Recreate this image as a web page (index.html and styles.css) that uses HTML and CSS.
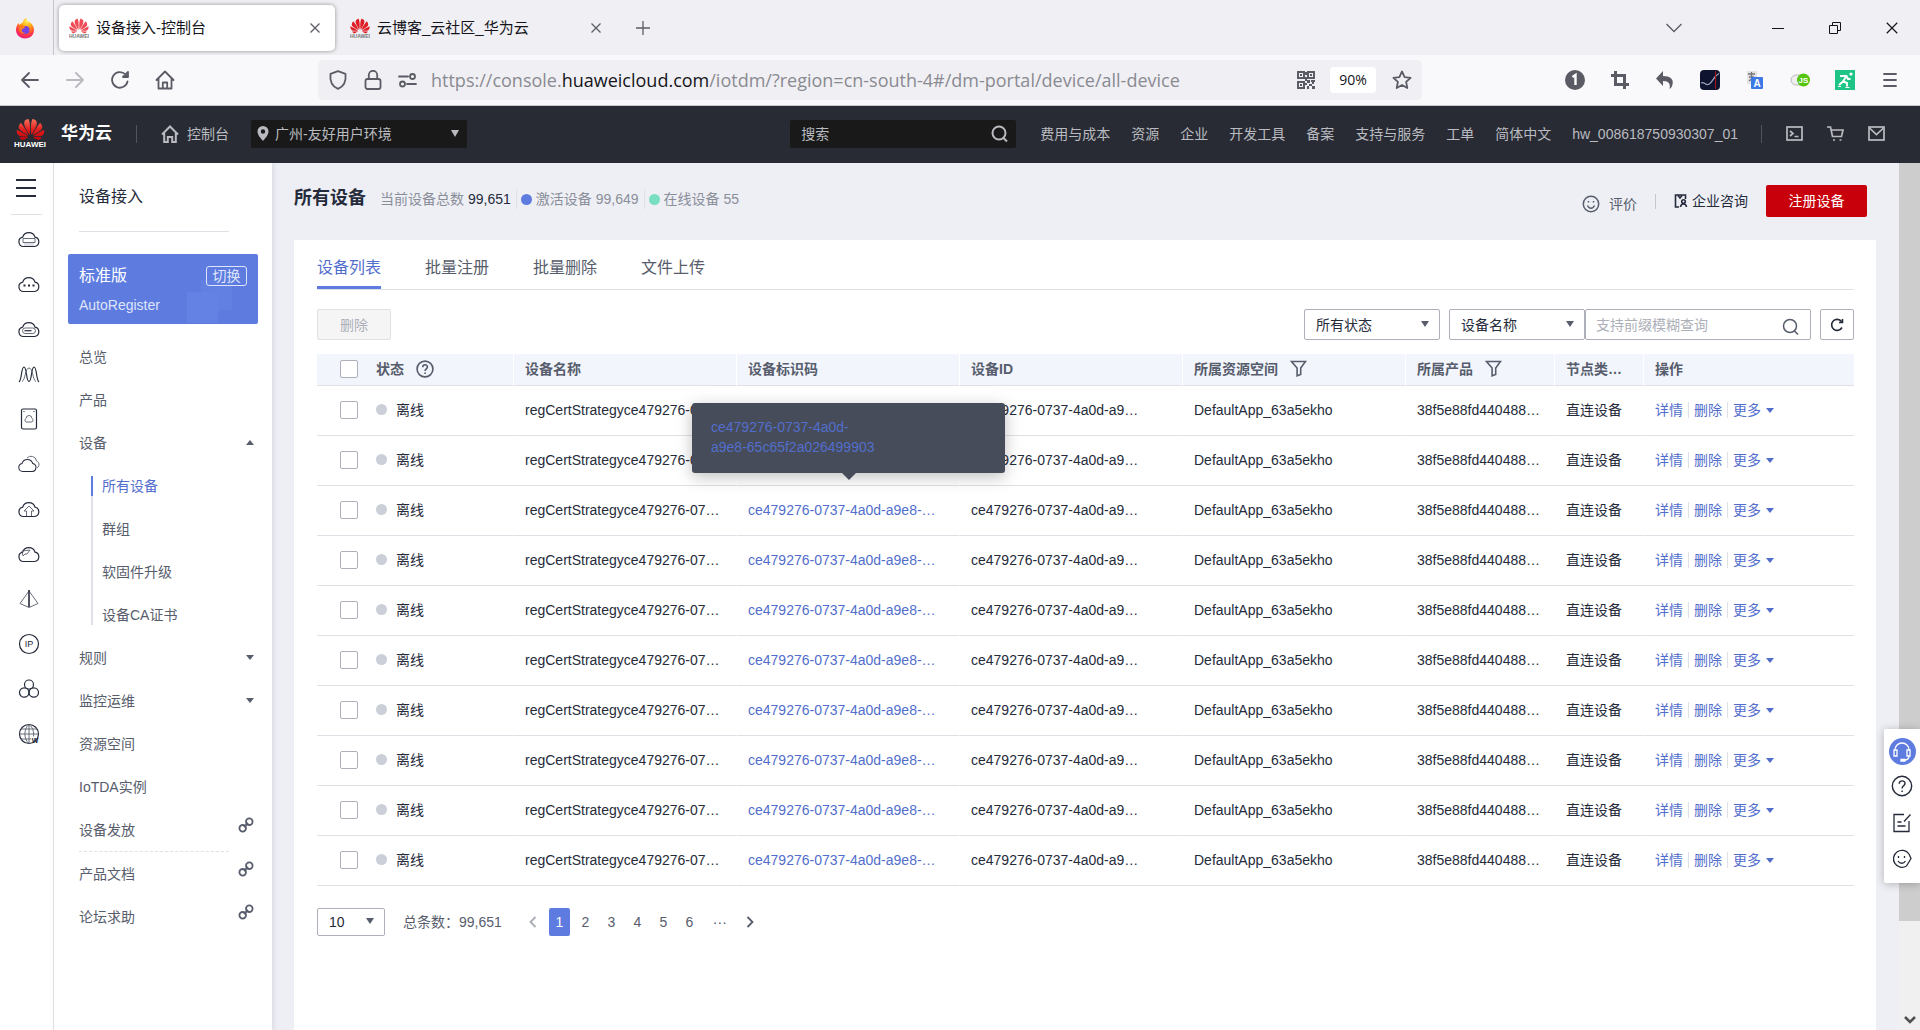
FILE: index.html
```html
<!DOCTYPE html>
<html lang="zh-CN">
<head>
<meta charset="utf-8">
<title>设备接入-控制台</title>
<link rel="stylesheet" href="styles.css">
</head>
<body>
<svg class="defs" aria-hidden="true">
  <linearGradient id="redfade" x1="0" y1="0" x2="0" y2="1"><stop offset="0" stop-color="#f6705a"/><stop offset=".5" stop-color="#e0201f"/><stop offset="1" stop-color="#c8000b"/></linearGradient>
  <radialGradient id="fox" cx=".6" cy=".15" r=".9"><stop offset="0" stop-color="#fff44f"/><stop offset=".4" stop-color="#ff980e"/><stop offset=".75" stop-color="#ff3647"/><stop offset="1" stop-color="#e31587"/></radialGradient>
  <symbol id="petals" viewBox="0 2 24 20"><path d="M3.67 6.14S1.82 7.91 1.72 9.78v.35c.08 1.51 1.22 2.4 1.22 2.4 1.83 1.79 6.26 4.04 7.3 4.55 0 0 .06.03.1-.01l.02-.04v-.04C7.52 10.8 3.67 6.14 3.67 6.14zM9.65 18.6c-.02-.08-.1-.08-.1-.08l-7.38.26c.8 1.43 2.15 2.53 3.56 2.2.96-.25 3.16-1.78 3.88-2.3.06-.05.04-.09.04-.09zm.08-.78C6.49 15.63.21 12.28.21 12.28c-.15.46-.2.9-.21 1.3v.07c0 1.07.4 1.82.4 1.82.8 1.69 2.34 2.2 2.34 2.2.7.3 1.4.31 1.4.31.12.02 4.4 0 5.54 0 .05 0 .08-.05.08-.05v-.06c0-.03-.03-.05-.03-.05zM9.06 3.19a3.42 3.42 0 00-2.57 3.15v.41c.03.6.16 1.05.16 1.05.66 2.9 3.86 7.65 4.55 8.65.05.05.1.03.1.03a.1.1 0 00.06-.1c1.06-10.6-1.11-13.42-1.11-13.42-.32.02-1.19.23-1.19.23zm8.3 2.27s-.49-1.8-2.44-2.28c0 0-.57-.14-1.17-.22 0 0-2.18 2.81-1.12 13.43.01.07.06.08.06.08.07.03.1-.03.1-.03.72-1.03 3.9-5.76 4.55-8.64 0 0 .36-1.4.02-2.34zm-2.92 13.07s-.07 0-.09.05c0 0-.01.07.03.1.7.51 2.85 2 3.88 2.3 0 0 .16.05.43.06h.14c.69-.02 1.9-.37 3-2.26l-7.4-.25zm7.83-8.41c.14-2.06-1.94-3.97-1.94-3.98 0 0-3.85 4.66-6.67 10.8 0 0-.03.08.02.13l.04.01h.06c1.06-.53 5.46-2.77 7.28-4.54 0 0 1.15-.93 1.21-2.42zm1.52 2.14s-6.28 3.37-9.52 5.55c0 0-.05.04-.03.11 0 0 .03.06.07.06 1.16 0 5.56 0 5.67-.02 0 0 .57-.02 1.27-.29 0 0 1.56-.5 2.37-2.27 0 0 .73-1.45.17-3.14z"/></symbol>
  <symbol id="x" viewBox="0 0 12 12"><path d="M1.500 1.500l9 9M10.500 1.500l-9 9"/></symbol>
  <symbol id="cloud" viewBox="0 0 22 18"><path d="M5.500 16.500a4.700 4.700 0 0 1-.8-9.300A6.400 6.400 0 0 1 17 7.200a4.700 4.700 0 0 1-.5 9.300z"/></symbol>
  <symbol id="search" viewBox="0 0 18 18"><circle cx="8" cy="8" r="6.500"/><path d="M12.500 13l3.500 3.500"/></symbol>
  <symbol id="link" viewBox="0 0 16 16"><circle cx="11.300" cy="4.700" r="3.300"/><circle cx="4.700" cy="11.300" r="3.300"/><path d="M6 10l4-4"/></symbol>
  <symbol id="filter" viewBox="0 0 17 17"><path d="M1.500 1.500h14l-4.800 6.500v6.500l-3.600 1.300V8z"/></symbol>
  <symbol id="smile" viewBox="0 0 18 18"><circle cx="9" cy="9" r="7.700"/><path d="M5.500 10.500c1.500 3.500 5.500 3.500 7 0"/><path d="M6.500 6v1.500M11.500 6v1.500"/></symbol>
  <symbol id="help" viewBox="0 0 20 20"><circle cx="10" cy="10" r="8.800"/><path d="M7.500 8c0-3.600 5.200-3.400 5.200-.3 0 2-2.600 2.200-2.600 4.500M10.100 14v1.500"/></symbol>
</svg>

<div class="tabstrip">
  <div class="pin"><svg width="20" height="22" viewBox="0 0 20 22"><path fill="url(#fox)" d="M10.500 1c1 1 1.500 2 2 3.500C15 5 19 8 19 13c0 5-4 8.500-9 8.500S1 17.500 1 13c0-3 1-5 2.500-7 .2 1 .5 1.500 1 2 .8-1.200 2-1.800 3-2C8 4 9 2.500 10.500 1z"/><circle cx="10.500" cy="13" r="4" fill="#7542e5"/><path fill="#ff7d1e" d="M5 9c3-1 5 0 5 1.500-1 1.500-3 1-3.500 2.500 0 2 2 3 4 2.500-2 2-6.500.5-6-3z"/></svg></div>
  <div class="tab tab-on"><svg class="fav" viewBox="0 0 20 20"><use href="#petals" x="0" y="0" width="20" height="16" fill="#ef4a55"/><text x="10" y="19.600" class="favtext">HUAWEI</text></svg><span>设备接入-控制台</span><button aria-label="关闭标签"><svg class="ln" width="12" height="12"><use href="#x"/></svg></button></div>
  <div class="tab"><svg class="fav" viewBox="0 0 20 20"><use href="#petals" x="0" y="0" width="20" height="16" fill="#df1f26"/><text x="10" y="19.600" class="favtext">HUAWEI</text></svg><span>云博客_云社区_华为云</span><button aria-label="关闭标签"><svg class="ln" width="12" height="12"><use href="#x"/></svg></button></div>
  <button class="newtab" aria-label="新标签"><svg class="ln" width="16" height="16"><path d="M8 1v14M1 8h14"/></svg></button>
  <div class="winbtns">
    <button class="alltabs" aria-label="所有标签"><svg class="ln" width="18" height="10"><path d="M1.500 1l7.500 7.500L16.500 1"/></svg></button>
    <button aria-label="最小化"><svg class="ln dark" width="14" height="14"><path d="M1 7.500h12"/></svg></button>
    <button aria-label="还原"><svg class="ln dark" width="14" height="14"><path d="M1.500 4.500h8v8h-8zM4.500 4V1.500h8v8H10"/></svg></button>
    <button aria-label="关闭"><svg class="ln dark" width="14" height="14" viewBox="0 0 12 12"><use href="#x"/></svg></button>
  </div>
</div>

<div class="toolbar">
  <div class="navbtns">
    <button aria-label="后退"><svg class="ln ln2" width="20" height="20"><path d="M18 10H2M9 3l-7 7 7 7"/></svg></button>
    <button aria-label="前进" class="off"><svg class="ln ln2" width="20" height="20"><path d="M2 10h16M11 3l7 7-7 7"/></svg></button>
    <button aria-label="刷新"><svg class="ln ln2" width="20" height="20"><path d="M17.500 11.500a7.800 7.800 0 1 1-2-7L17.500 6.500M18 2v5h-5z"/></svg></button>
    <button aria-label="主页"><svg class="ln ln2" width="20" height="20"><path d="M1.500 10L10 1.500l8.500 8.500M3.500 8.500V18.500h13V8.500M7.800 18v-5.500h4.400V18"/></svg></button>
  </div>
  <div class="urlbar">
    <svg class="ln ln2" width="20" height="20"><path d="M10 1.200l7.500 2.600c.8 7-1.800 12.700-7.500 15C4.300 16.500 1.700 10.800 2.500 3.800z"/></svg>
    <svg class="ln ln2" width="20" height="20"><rect x="2.500" y="9" width="15" height="10" rx="2"/><path d="M5.800 9V5a4.200 4.200 0 0 1 8.400 0v4"/></svg>
    <svg class="ln ln2" width="20" height="20"><path d="M1 6.500h9M9 14h9"/><circle cx="14.500" cy="6.500" r="2.500"/><circle cx="4.500" cy="14" r="2.500"/></svg>
    <div class="url">https://console.<b>huaweicloud.com</b>/iotdm/?region=cn-south-4#/dm-portal/device/all-device</div>
    <svg class="qr" width="18" height="18"><path fill="none" stroke="#5b5b66" stroke-width="2" d="M1 1h6v6H1zM11 1h6v6h-6zM1 11h6v6H1z"/><path fill="#5b5b66" d="M3 3h2v2H3zM13 3h2v2h-2zM3 13h2v2H3zM8 1h2v3H8zM8 6h2v4H8zM10 9h3v3h-3zM14 9h4v2h-4zM8 12h2v2H8zM12 13h3v2h-3zM15 11h2v2h-2zM10 15h2v3h-2zM15 15h3v3h-3z"/></svg>
    <button class="zoom">90%</button>
    <svg class="ln ln2" width="22" height="20" viewBox="0 0 20 20"><path d="M10 1.500l2.600 5.600 6 .7-4.500 4.100 1.200 6.100L10 15l-5.300 3 1.200-6.100L1.400 7.800l6-.7z"/></svg>
  </div>
  <div class="exts">
    <svg width="20" height="20"><circle cx="10" cy="10" r="10" fill="#5b5b66"/><path d="M7.500 7L10.500 5v10" fill="none" stroke="#fff" stroke-width="2.400"/></svg>
    <svg width="20" height="20"><path fill="none" stroke="#5b5b66" stroke-width="3" d="M1 5.500h13.500V19M5.500 1v13.500H19"/></svg>
    <svg width="20" height="20"><path fill="#5b5b66" d="M8 1v5c7 0 11 3 9.500 8.500-.5 2-1.500 3.500-3 4.500 1.200-5-.5-8-6.500-8v5L1 8.500z"/></svg>
    <svg width="20" height="20"><rect width="20" height="20" rx="4" fill="#0e1430"/><path fill="none" stroke="#9ba4b8" stroke-width="1.200" d="M1 13c3-2 4 2 7 1.500 4-.5 5-8 11-11"/><path d="M15.500 1v18" stroke="#a11" /></svg>
    <svg width="20" height="20"><rect x="2" y="1" width="10" height="13" rx="1" fill="#e3e3e6"/><path d="M3 4h7M6.500 2v9M4 7h5M4 11l5-4" stroke="#777" fill="none" stroke-width="1.300"/><rect x="6" y="7" width="12" height="12" rx="1" fill="#3c78e6"/><text x="12" y="17" class="exta">A</text></svg>
    <svg width="20" height="20"><rect x="1" y="5" width="16" height="10" rx="5" fill="#eee" stroke="#bbb"/><circle cx="13.500" cy="10" r="6.500" fill="#53c60c"/><text x="13.500" y="13" class="extjs">JS</text></svg>
    <svg width="20" height="20"><rect width="20" height="20" fill="#1ec586"/><circle cx="16" cy="4" r="1.600" fill="#fff"/><path d="M5 6h6.500l1.500 3h2.500M11.500 6L8 11.500l4 1.500v3.500M8 11.500L4 15" stroke="#fff" stroke-width="1.900" fill="none"/><path d="M3 16.500h3M10.500 17.500h4" stroke="#fff" fill="none"/></svg>
    <button aria-label="菜单"><svg class="ln ln2" width="20" height="20"><path d="M4 4h12M4 10h12M4 16h12"/></svg></button>
  </div>
</div>

<header class="top">
  <a class="brand" href="#"><span class="mark"><svg width="29" height="23"><use href="#petals" fill="url(#redfade)"/></svg><small>HUAWEI</small></span><strong>华为云</strong></a>
  <i class="vbar"></i>
  <a class="console" href="#"><svg width="18" height="18"><path d="M1 9.500L9 1.500l8 8M3.200 8v9h3.600v-5h4.400v5h3.600V8"/></svg>控制台</a>
  <button class="region"><svg width="12" height="15"><path fill="#babbc0" fill-rule="evenodd" d="M6 0a5.500 5.500 0 0 1 5.500 5.500C11.500 9 8 12.500 6 15 4 12.500.5 9 .5 5.500A5.500 5.500 0 0 1 6 0zm0 3.300a2.200 2.200 0 1 0 0 4.400 2.200 2.200 0 0 0 0-4.400z"/></svg><span>广州-友好用户环境</span><i class="tri"></i></button>
  <div class="topright">
    <label class="topsearch"><input type="text" placeholder="搜索" aria-label="搜索"><svg width="18" height="18"><use href="#search"/></svg></label>
    <nav><a href="#">费用与成本</a><a href="#">资源</a><a href="#">企业</a><a href="#">开发工具</a><a href="#">备案</a><a href="#">支持与服务</a><a href="#">工单</a><a href="#">简体中文</a><a href="#">hw_008618750930307_01</a></nav>
    <i class="vbar"></i>
    <div class="topicons">
      <svg width="17" height="17"><rect x="1" y="2" width="15" height="13"/><path d="M4 6l3 2.500L4 11M8.500 11.500h4"/></svg>
      <svg width="17" height="17"><path d="M0 2h3.500l2 9.500h9L16 5H4.500"/><path d="M6 15h2M12.500 15h2"/></svg>
      <svg width="17" height="17"><rect x="1" y="2" width="15" height="13"/><path d="M1.500 3l7 6.500L15.500 3"/></svg>
    </div>
  </div>
</header>

<div class="app">
  <aside class="rail">
    <button class="burger" aria-label="展开菜单"><i></i><i></i><i></i></button>
    <hr>
    <a href="#" aria-label="云服务器"><svg viewBox="0 0 22 22"><use href="#cloud" y="2" width="22" height="18"/><path class="thin" d="M5 10.500h12v4H5z"/><path fill="#dfe1e6" stroke="none" d="M6 15h10v3H6z"/></svg></a>
    <a href="#" aria-label="云容器"><svg viewBox="0 0 22 22"><use href="#cloud" y="2" width="22" height="18"/><path stroke-width="2" d="M5.500 12.500h2M10 12.500h2M14.500 12.500h2"/></svg></a>
    <a href="#" aria-label="云硬盘"><svg viewBox="0 0 22 22"><use href="#cloud" y="2" width="22" height="18"/><rect class="thin" x="4.500" y="10" width="13" height="5.500" rx="2.700"/><path d="M6.500 12.700h7"/></svg></a>
    <a href="#" aria-label="弹性伸缩"><svg viewBox="0 0 22 22"><path d="M1 19C4 17 3 4 6 4s2 14.500 5 14.500S13 4 16 4s2 13 5 15"/><path class="thin" d="M4 18.500C7.500 17 7 5 11 5s3.500 12 7 13.500"/></svg></a>
    <a href="#" aria-label="存储"><svg viewBox="0 0 22 22"><rect x="3.500" y="1" width="15" height="20" rx="1.500"/><path class="thin" d="M8 14a2 2 0 0 1 0-3.500 3 3 0 0 1 6 0A2 2 0 0 1 14 14z"/><path d="M5.500 3.500h1M15.500 3.500h1"/></svg></a>
    <a href="#" aria-label="多云"><svg viewBox="0 0 22 22"><path class="thin" d="M9 5a5.500 5.500 0 0 1 9.500 3c3 1 3.500 5 .5 7"/><use href="#cloud" y="4" width="19" height="16"/></svg></a>
    <a href="#" aria-label="上传"><svg viewBox="0 0 22 22"><use href="#cloud" y="2" width="22" height="18"/><path class="thin" d="M8.500 18v-5H6l5-5 5 5h-2.500v5"/></svg></a>
    <a href="#" aria-label="CDN"><svg viewBox="0 0 22 22"><use href="#cloud" y="2" width="22" height="18"/><path class="thin" d="M4 8l8-1-3 4h-2l-2 2z"/></svg></a>
    <a href="#" aria-label="网络"><svg viewBox="0 0 22 22"><path class="thin" d="M11 3L2 15.500l9 4 9-4z"/><path stroke-width="1.600" d="M11 2v17"/></svg></a>
    <a href="#" aria-label="弹性公网IP"><svg viewBox="0 0 22 22"><circle cx="11" cy="11" r="9.500"/><text x="11" y="14" class="ip">IP</text></svg></a>
    <a href="#" aria-label="集群"><svg viewBox="0 0 22 22"><circle cx="11" cy="6.500" r="4.500"/><circle cx="6.200" cy="14.500" r="4.700"/><circle cx="15.800" cy="14.500" r="4.700"/></svg></a>
    <a href="#" aria-label="域名"><svg viewBox="0 0 22 22"><circle cx="11" cy="11" r="9.500"/><path class="thin" d="M1.500 11h19M3 6h16M3 16h10M11 1.500v19M11 1.500C5.500 6 5.500 16 11 20.500M11 1.500c4 3 5 7 4.500 12"/><text x="17" y="20" class="w">W</text></svg></a>
  </aside>

  <aside class="side">
    <h2>设备接入</h2>
    <div class="plan"><div class="planrow"><strong>标准版</strong><button>切换</button></div><span>AutoRegister</span></div>
    <nav class="menu">
      <a href="#">总览</a>
      <a href="#">产品</a>
      <a href="#">设备<i class="tri up"></i></a>
      <div class="sub"><a href="#" class="on">所有设备</a><a href="#">群组</a><a href="#">软固件升级</a><a href="#">设备CA证书</a></div>
      <a href="#">规则<i class="tri"></i></a>
      <a href="#">监控运维<i class="tri"></i></a>
      <a href="#">资源空间</a>
      <a href="#">IoTDA实例</a>
      <a href="#">设备发放<svg width="16" height="16"><use href="#link"/></svg></a>
      <hr>
      <a href="#">产品文档<svg width="16" height="16"><use href="#link"/></svg></a>
      <a href="#">论坛求助<svg width="16" height="16"><use href="#link"/></svg></a>
    </nav>
  </aside>

  <main>
    <div class="pagehead">
      <h1>所有设备</h1>
      <div class="stats"><span>当前设备总数 <b>99,651</b></span><span><i class="dot blue"></i>激活设备 99,649</span><span><i class="dot green"></i>在线设备 55</span></div>
      <div class="actions">
        <a class="rate" href="#"><svg width="18" height="18"><use href="#smile"/></svg>评价</a>
        <i class="vbar"></i>
        <a class="consult" href="#"><svg width="14" height="14"><path d="M5 13H1.500V1h10v4M4 1.500l2 2.500 2-2.500"/><circle cx="9.500" cy="7.500" r="1.800"/><path d="M6.500 13c.5-4 5.500-4 6 0"/></svg>企业咨询</a>
        <button class="primary">注册设备</button>
      </div>
    </div>
    <section class="panel">
      <nav class="tabs"><a href="#" class="on">设备列表</a><a href="#">批量注册</a><a href="#">批量删除</a><a href="#">文件上传</a></nav>
      <div class="filters">
        <button class="del" disabled>删除</button>
        <span class="sel"><select aria-label="状态"><option>所有状态</option></select></span>
        <span class="sel joined"><select aria-label="查询字段"><option>设备名称</option></select></span>
        <label class="query"><input type="text" placeholder="支持前缀模糊查询" aria-label="查询"><svg width="18" height="18"><use href="#search"/></svg></label>
        <button class="refresh" aria-label="刷新"><svg width="16" height="16"><path d="M13 10.500a5.500 5.500 0 1 1-.5-6M13.500 2v3.500H10"/></svg></button>
      </div>
      <table>
        <colgroup><col class="c-status"><col class="c-name"><col class="c-name"><col class="c-name"><col class="c-name"><col class="c-prod"><col class="c-type"><col></colgroup>
        <thead><tr>
          <th><div class="st"><input type="checkbox" aria-label="全选">状态<svg width="18" height="18" class="q"><use href="#help"/></svg></div></th>
          <th>设备名称</th><th>设备标识码</th><th>设备ID</th>
          <th><div class="fl">所属资源空间<svg width="17" height="17"><use href="#filter"/></svg></div></th>
          <th><div class="fl">所属产品<svg width="17" height="17"><use href="#filter"/></svg></div></th>
          <th>节点类…</th><th>操作</th>
        </tr></thead>
        <tbody id="rows"></tbody>
      </table>
      <div class="pager">
        <span class="sel"><select aria-label="每页条数"><option>10</option></select></span>
        <span class="total">总条数：99,651</span>
        <div class="pages"><button class="prev" aria-label="上一页"><svg width="8" height="12"><path d="M6.500 1L1.500 6l5 5"/></svg></button><button class="on">1</button><button>2</button><button>3</button><button>4</button><button>5</button><button>6</button><span>···</span><button aria-label="下一页"><svg width="8" height="12"><path d="M1.500 1l5 5-5 5"/></svg></button></div>
      </div>
    </section>
  </main>
  <div class="scroll"><div class="thumb"></div><svg width="12" height="8"><path d="M1 1l5 5 5-5"/></svg></div>
  <div class="float">
    <button class="svc" aria-label="客服"><svg width="20" height="20"><path d="M3 8a7 7 0 0 1 14 0M2 8h3v6H2zM15 8h3v6h-3zM17 14c0 3-2 4-5 4.500M9 17.500h4v1.500H9z"/></svg></button>
    <button aria-label="帮助"><svg width="22" height="22"><use href="#help"/></svg></button>
    <button aria-label="建议"><svg width="20" height="20"><path d="M12 1.500H2v17h15V8M18.500 1.500l-6.500 7M5.500 9h4M5.500 13h8"/></svg></button>
    <button aria-label="评价"><svg width="20" height="20"><path d="M14.500 17A8.500 8.500 0 1 1 17 5l2 4.500-4.500 7.500M6 12c2 3 5.500 3 7.500 0M6.500 7v2M12.500 7v2"/></svg></button>
  </div>
</div>
<script src="app.js"></script>
</body>
</html>
```
FILE: styles.css
```css
* { box-sizing: border-box; }
body { margin: 0; min-height: 100vh; display: flex; flex-direction: column; font: 14px/20px "Liberation Sans", "Noto Sans CJK SC", sans-serif; color: #252b3a; background: #eeeff5; }
button, input, select { font: inherit; color: inherit; margin: 0; padding: 0; border: 0; background: none; }
a { color: inherit; text-decoration: none; }
h1, h2 { margin: 0; }
svg { flex: none; display: block; fill: none; }
.defs { position: absolute; width: 0; height: 0; }
.ln { stroke: #5b5b66; stroke-width: 1.300; fill: none; }
.ln2 { stroke-width: 1.800; stroke-linejoin: round; stroke-linecap: round; }
.dark { stroke: #15141a; stroke-width: 1; }
.tri { width: 0; height: 0; border: 5px solid transparent; border-top: 6px solid #575d6c; border-bottom: 0; }
.tri.up { border-top: 0; border-bottom: 6px solid #575d6c; }
.vbar { width: 1px; height: 18px; background: #50545e; }

/* browser chrome */
.tabstrip { height: 55px; display: flex; align-items: center; background: #f0f0f4; }
.pin { width: 54px; height: 55px; display: flex; align-items: center; justify-content: center; padding-right: 4px; border-right: 1px solid #c5c5cb; margin-right: 5px; }
.tab { width: 276px; height: 46px; display: flex; align-items: center; gap: 7px; padding: 0 14px 0 10px; border-radius: 5px; font-size: 15px; color: #15141a; margin-right: 5px; }
.tab span { flex: 1; }
.tab-on { background: #fff; box-shadow: 0 0 4px rgba(0,0,0,.4); }
.fav { width: 20px; height: 20px; }
.favtext { font: bold 5px "Liberation Sans", sans-serif; fill: #777; text-anchor: middle; }
.newtab { padding: 0 14px; }
.winbtns { margin-left: auto; display: flex; align-items: center; }
.winbtns button { width: 57px; display: flex; justify-content: center; }
.winbtns .alltabs { margin-right: 47px; }
.toolbar { height: 51px; display: flex; align-items: center; background: #f9f9fb; border-bottom: 1px solid #c8c8cc; }
.navbtns { display: flex; gap: 25px; padding-left: 20px; width: 318px; }
.off { opacity: .4; }
.urlbar { flex: 1; height: 40px; display: flex; align-items: center; gap: 15px; padding: 0 9px 0 10px; border-radius: 5px; background: #f0f0f4; }
.url { flex: 1; margin-left: -2px; font: 18px/24px "Open Sans", "Noto Sans", sans-serif; color: #8a8a91; white-space: nowrap; }
.url b { font-weight: 400; color: #15141a; }
.zoom { width: 46px; height: 26px; border-radius: 4px; background: #fff; font-family: "Open Sans", sans-serif; color: #15141a; }
.exts { display: flex; align-items: center; gap: 25px; padding: 0 20px 0 143px; }
.exta { font: bold 10px "Liberation Sans", sans-serif; fill: #fff; text-anchor: middle; }
.extjs { font: bold 8px "Liberation Sans", sans-serif; fill: #fff; text-anchor: middle; }

/* console header */
.top { height: 57px; display: flex; align-items: center; background: #282b33; color: #babbc0; padding: 0 35px 2px 0; }
.brand { display: flex; align-items: center; gap: 15px; padding-left: 14px; margin-right: 24px; }
.mark { display: flex; flex-direction: column; align-items: center; }
.mark small { font: bold 8px/8px "Liberation Sans", sans-serif; color: #fff; }
.brand strong { font-size: 17px; color: #fff; }
.console { display: flex; align-items: center; gap: 8px; margin: 0 22px 0 24px; }
.console svg { stroke: #babbc0; stroke-width: 2; }
.region { width: 216px; height: 28px; display: flex; align-items: center; gap: 6px; padding: 0 8px 0 6px; border-radius: 2px; background: #191919; }
.region span { flex: 1; text-align: left; }
.region .tri { border-top: 7px solid #babbc0; border-left-width: 4px; border-right-width: 4px; }
.topright { margin-left: auto; display: flex; align-items: center; }
.topsearch { width: 226px; height: 28px; display: flex; align-items: center; padding: 0 7px 0 11px; border-radius: 2px; background: #191919; }
.topsearch input { flex: 1; min-width: 0; }
.topsearch input::placeholder { color: #babbc0; opacity: 1; }
.topsearch svg { stroke: #babbc0; stroke-width: 2; }
.top nav { display: flex; gap: 21px; margin: 0 23px 0 24px; white-space: nowrap; }
.topicons { display: flex; gap: 24px; margin-left: 24px; }
.topicons svg { stroke: #babbc0; stroke-width: 1.700; }

.app { flex: 1; display: flex; }
.rail { width: 54px; display: flex; flex-direction: column; align-items: center; background: #fff; border-right: 1px solid #dfe1e6; }
.burger { width: 20px; margin: 16px 0 17px -2px; display: flex; flex-direction: column; gap: 6px; }
.burger i { height: 2px; background: #252b3a; }
.rail hr { width: 31px; margin: 0 0 1px; border: 0; border-top: 1px solid #dfe1e6; }
.rail a { height: 45px; display: flex; align-items: center; padding-left: 5px; }
.rail svg { width: 22px; height: 22px; stroke: #252b3a; stroke-width: 1.200; }
.rail .thin { stroke: #575d6c; stroke-width: .9; }
.ip { font: 9px "Liberation Sans", sans-serif; fill: #252b3a; stroke: none; text-anchor: middle; }
.w { font: bold 7px "Liberation Sans", sans-serif; fill: #252b3a; stroke: none; text-anchor: middle; }

.side { width: 218px; background: #fff; box-shadow: 2px 0 4px rgba(80,90,120,.12); padding: 23px 14px 0; color: #575d6c; }
.side h2 { margin: 0 29px 22px 11px; padding-bottom: 23px; border-bottom: 1px solid #dfe1e6; font-size: 16px; line-height: 22px; font-weight: 400; color: #252b3a; }
.plan { height: 70px; padding: 11px; border-radius: 2px; color: #dfe5f9; background: linear-gradient(#6482e4, #6482e4) 119px 38px / 31px 31px no-repeat, linear-gradient(#627fe2, #627fe2) 133px 26px / 31px 30px no-repeat, #5e7ce0; }
.planrow { display: flex; justify-content: space-between; align-items: center; margin-bottom: 8px; }
.planrow strong { font-size: 16px; font-weight: 400; color: #fff; line-height: 22px; }
.plan button { width: 41px; height: 20px; line-height: 18px; border: 1px solid #dfe5f9; border-radius: 3px; }
.menu { padding: 11px 0 0 11px; }
.menu a { height: 43px; display: flex; align-items: center; justify-content: space-between; padding-right: 4px; }
.menu svg { stroke: #575d6c; stroke-width: 1.800; align-self: flex-start; margin-top: 9px; }
.menu .tri { border-width: 4px; border-top-width: 5px; border-bottom-width: 0; }
.menu .tri.up { border-top-width: 0; border-bottom-width: 5px; }
.sub { margin: 12px 0 11px 12px; border-left: 2px solid #dfe1e6; }
.menu .sub a { height: 20px; margin: 0 0 23px -2px; padding-left: 9px; border-left: 2px solid transparent; }
.menu .sub a:last-child { margin-bottom: 0; }
.menu .sub a.on { color: #526ecc; border-color: #5e7ce0; }
.menu hr { margin: 0 29px 0 0; border: 0; border-top: 1px dashed #dfe1e6; }

main { flex: 1; min-width: 0; display: flex; flex-direction: column; padding: 0 23px 0 22px; }
.pagehead { height: 77px; display: flex; align-items: flex-start; }
.pagehead h1 { font-size: 18px; line-height: 24px; margin: 23px 14px 0 0; }
.stats { display: flex; margin-top: 26px; color: #8a8e99; }
.stats span { display: flex; align-items: center; gap: 4px; }
.stats span + span { border-left: 1px solid #dfe1e6; margin-left: 5px; padding-left: 4px; }
.stats b { font-weight: 400; color: #252b3a; }
.dot { width: 11px; height: 11px; border-radius: 50%; }
.blue { background: #5e7ce0; }
.green { background: #7adfc0; }
.actions { margin: 22px 9px 0 auto; display: flex; align-items: center; }
.actions a { display: flex; align-items: center; }
.actions .vbar { height: 15px; background: #c5c8d0; margin: 0 18px; }
.actions .rate { gap: 9px; margin-top: 6px; color: #575d6c; }
.rate svg { stroke: #575d6c; stroke-width: 1.500; }
.consult { gap: 4px; }
.consult svg { stroke: #252b3a; stroke-width: 1.600; }
.primary { width: 101px; height: 32px; margin-left: 18px; border-radius: 2px; background: #c7000b; color: #fff; }

.panel { flex: 1; background: #fff; padding: 0 22px 0 23px; }
.tabs { height: 50px; display: flex; gap: 44px; border-bottom: 1px solid #dfe1e6; font-size: 16px; line-height: 22px; color: #575d6c; }
.tabs a { padding-top: 17px; }
.tabs .on { color: #526ecc; border-bottom: 3px solid #5e7ce0; }
.filters { display: flex; margin: 19px 0 14px; }
.filters .del { width: 74px; height: 31px; margin-right: auto; border: 1px solid #dfe1e6; border-radius: 2px; background: #f5f5f6; color: #adb0b8; }
.sel { position: relative; width: 136px; height: 31px; margin-right: 9px; }
.sel.joined { margin-right: 0; }
.sel select { appearance: none; width: 100%; height: 100%; padding: 0 11px; border: 1px solid #adb0b8; border-radius: 2px; background: #fff; }
.sel::after { content: ""; position: absolute; right: 11px; top: 12px; border: 4px solid transparent; border-top: 6px solid #575d6c; border-bottom: 0; pointer-events: none; }
.query { width: 226px; height: 31px; display: flex; align-items: center; padding: 0 10px; border: 1px solid #adb0b8; border-radius: 2px; }
.query input { flex: 1; min-width: 0; }
.query input::placeholder { color: #adb0b8; opacity: 1; }
.query svg { stroke: #575d6c; stroke-width: 1.500; margin-top: 4px; }
.refresh { width: 34px; height: 31px; margin-left: 9px; display: flex; align-items: center; justify-content: center; border: 1px solid #adb0b8; border-radius: 2px; }
.refresh svg { stroke: #252b3a; stroke-width: 1.600; }

table { width: 100%; table-layout: fixed; border-collapse: separate; border-spacing: 0; }
.c-status { width: 196px; }
.c-name { width: 223px; }
.c-prod { width: 149px; }
.c-type { width: 89px; }
th, td { padding: 0 0 2px 11px; text-align: left; white-space: nowrap; border-bottom: 1px solid #dfe1e6; }
th { height: 32px; background: #f2f5fc; color: #575d6c; font-weight: 700; border-left: 1px solid #fff; }
th:first-child { border-left: 0; }
td { height: 50px; position: relative; border-left: 1px solid transparent; }
th:first-child, td:first-child { padding-left: 23px; border-left: 0; }
.st, .fl, .ops { display: flex; align-items: center; }
.st input { appearance: none; width: 18px; height: 18px; margin-right: 18px; border: 1px solid #adb0b8; border-radius: 2px; background: #fff; }
.q { margin-left: 12px; stroke: #575d6c; stroke-width: 1.800; }
.fl { gap: 12px; }
.fl svg { stroke: #575d6c; stroke-width: 1.600; }
td .dot { background: #cacfd8; margin-right: 9px; }
td > a, .ops a { color: #526ecc; }
.ops a { padding: 0 5px; line-height: 16px; border-left: 1px solid #dfe1e6; }
.ops a:first-child { padding-left: 0; border: 0; }
.ops .tri { border-width: 4px; border-top: 5px solid #526ecc; border-bottom: 0; margin-top: 2px; }
.tip { position: absolute; z-index: 2; left: -45px; bottom: 62px; width: 313px; height: 70px; padding: 14px 19px; border-radius: 3px; background: #464c59; color: #526ecc; box-shadow: 0 4px 16px rgba(0,0,0,.25); }
.tip::after { content: ""; position: absolute; left: 150px; top: 100%; border: 7px solid transparent; border-top-color: #464c59; border-bottom: 0; }

.pager { display: flex; align-items: center; margin-top: 22px; color: #575d6c; }
.pager .sel { width: 68px; height: 28px; margin-right: 18px; color: #252b3a; }
.pager .sel::after { top: 10px; }
.pages { display: flex; align-items: center; gap: 5px; margin-left: 21px; }
.pages button, .pages span { width: 21px; height: 28px; display: flex; align-items: center; justify-content: center; border-radius: 2px; }
.pages span { width: 30px; }
.pages .on { background: #5e7ce0; color: #fff; }
.pages svg { stroke: #575d6c; stroke-width: 1.800; }
.pages .prev { opacity: .5; }

.scroll { width: 21px; display: flex; flex-direction: column; align-items: center; justify-content: space-between; background: #f0f0f0; padding-bottom: 6px; }
.thumb { width: 100%; height: 88%; background: #cdcdcd; }
.scroll svg { stroke: #505050; stroke-width: 2.500; }
.float { position: fixed; right: 0; top: 729px; width: 36px; height: 154px; display: flex; flex-direction: column; align-items: center; gap: 16px; padding-top: 9px; border-radius: 2px 0 0 2px; background: #fff; box-shadow: 0 1px 8px rgba(0,0,0,.25); }
.float svg { stroke: #252b3a; stroke-width: 1.300; }
.float .svc { width: 27px; height: 27px; margin-bottom: -6px; display: flex; align-items: center; justify-content: center; border-radius: 50%; background: #5e7ce0; }
.float .svc svg { stroke: #fff; }
```
FILE: app.js
```js
const tipRow = 2;
const row = (i) => `<tr>
  <td><div class="st"><input type="checkbox" aria-label="选择第 ${i + 1} 行"><i class="dot"></i>离线</div></td>
  <td>regCertStrategyce479276-07…</td>
  <td><a href="#">ce479276-0737-4a0d-a9e8-…</a>${i === tipRow ? '<div class="tip" role="tooltip">ce479276-0737-4a0d-<br>a9e8-65c65f2a026499903</div>' : ''}</td>
  <td>ce479276-0737-4a0d-a9…</td>
  <td>DefaultApp_63a5ekho</td>
  <td>38f5e88fd440488…</td>
  <td>直连设备</td>
  <td><div class="ops"><a href="#">详情</a><a href="#">删除</a><a href="#">更多</a><i class="tri"></i></div></td>
</tr>`;
document.getElementById('rows').innerHTML = Array.from({ length: 10 }, (_, i) => row(i)).join('');
```
